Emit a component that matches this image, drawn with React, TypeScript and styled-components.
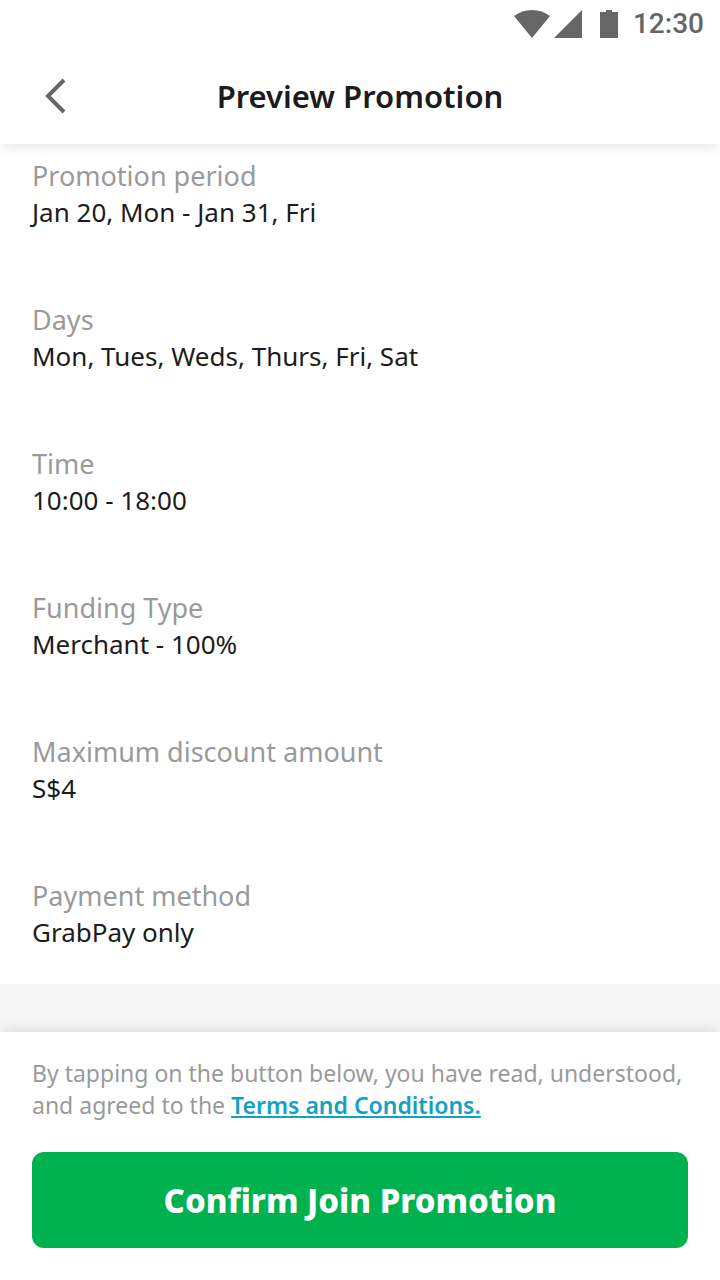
import React from "react";
import styled, { createGlobalStyle } from "styled-components";

const GlobalStyle = createGlobalStyle`
  *, *::before, *::after { box-sizing: border-box; }
  body {
    margin: 0;
    background: #ffffff;
    color: #1c1c1c;
    font-family: "Noto Sans", "Open Sans", sans-serif;
  }
`;

const Page = styled.div`
  display: flex;
  flex-direction: column;
  min-height: 100vh;
`;

const TopArea = styled.div`
  position: relative;
  background: #ffffff;
  box-shadow: 0 4px 12px -2px rgba(0, 0, 0, 0.12);
`;

const StatusBar = styled.div`
  display: flex;
  align-items: center;
  justify-content: flex-end;
  height: 48px;
  padding: 0 16px;
  color: #666666;
  font: 500 28px/48px Roboto, sans-serif;
`;

const Clock = styled.span`
  margin-left: 15px;
`;

const TitleBar = styled.header`
  display: grid;
  grid-template-columns: 64px 1fr 64px;
  align-items: center;
  height: 96px;
  padding: 0 24px;
`;

const BackButton = styled.button`
  display: flex;
  align-items: center;
  justify-content: center;
  width: 64px;
  height: 64px;
  padding: 0;
  border: 0;
  background: none;
  color: #666666;
  cursor: pointer;
`;

const Title = styled.h1`
  margin: 0;
  font-size: 31px;
  line-height: 48px;
  font-weight: 600;
  text-align: center;
`;

const Main = styled.main`
  flex: 1;
  background: #f6f6f6;
  padding-bottom: 48px;
`;

const Details = styled.dl`
  display: flex;
  flex-direction: column;
  gap: 72px;
  margin: 0;
  padding: 14px 32px 34px;
  background: #ffffff;
`;

const Detail = styled.div`
  font-size: 26px;
  line-height: 36px;
`;

const Label = styled.dt`
  color: #9a9a9a;
  font-size: 27px;
`;

const Value = styled.dd`
  margin: 0;
`;

const Footer = styled.footer`
  position: relative;
  display: flex;
  flex-direction: column;
  gap: 31px;
  padding: 25px 32px 32px;
  background: #ffffff;
  box-shadow: 0 -4px 12px -2px rgba(0, 0, 0, 0.12);
`;

const Notice = styled.p`
  margin: 0;
  color: #9a9a9a;
  font-size: 23px;
  line-height: 32px;
`;

const TermsLink = styled.a`
  color: #12a0c4;
  font-weight: 600;
  text-decoration: underline;
  text-decoration-thickness: 2px;
  text-underline-offset: 2px;
  text-decoration-skip-ink: none;
`;

const ConfirmButton = styled.button`
  height: 96px;
  border: 0;
  border-radius: 12px;
  background: #00b14f;
  color: #ffffff;
  font: inherit;
  font-size: 33px;
  font-weight: 800;
  cursor: pointer;
`;

const details = [
  { label: "Promotion period", value: "Jan 20, Mon - Jan 31, Fri" },
  { label: "Days", value: "Mon, Tues, Weds, Thurs, Fri, Sat" },
  { label: "Time", value: "10:00 - 18:00" },
  { label: "Funding Type", value: "Merchant - 100%" },
  { label: "Maximum discount amount", value: "S$4" },
  { label: "Payment method", value: "GrabPay only" },
];

function StatusIcons() {
  return (
    <svg width="104" height="28" viewBox="0 0 104 28" fill="currentColor" aria-hidden="true">
      <path d="M0 6Q8 0 18 0T36 6L18 28Z" />
      <path d="M68 0V28H40Z" />
      <path d="M86 2H92V0H98V2H104V28H86Z" />
    </svg>
  );
}

function BackIcon() {
  return (
    <svg width="24" height="36" viewBox="0 0 24 36" fill="none" stroke="currentColor" strokeWidth="4" aria-hidden="true">
      <path d="M20 2L4 18L20 34" />
    </svg>
  );
}

export default function App() {
  return (
    <Page>
      <GlobalStyle />
      <TopArea>
        <StatusBar>
          <StatusIcons />
          <Clock>12:30</Clock>
        </StatusBar>
        <TitleBar>
          <BackButton type="button" aria-label="Back">
            <BackIcon />
          </BackButton>
          <Title>Preview Promotion</Title>
        </TitleBar>
      </TopArea>
      <Main>
        <Details>
          {details.map(({ label, value }) => (
            <Detail key={label}>
              <Label>{label}</Label>
              <Value>{value}</Value>
            </Detail>
          ))}
        </Details>
      </Main>
      <Footer>
        <Notice>
          By tapping on the button below, you have read, understood, and agreed to the{" "}
          <TermsLink href="#terms">Terms and Conditions.</TermsLink>
        </Notice>
        <ConfirmButton type="button">Confirm Join Promotion</ConfirmButton>
      </Footer>
    </Page>
  );
}
